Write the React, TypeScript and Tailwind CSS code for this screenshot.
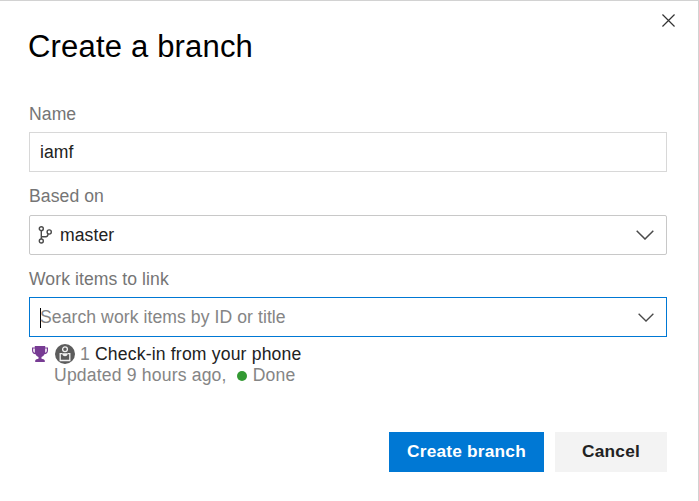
import type { ReactNode } from "react";

function Chevron({ className }: { className: string }) {
  return (
    <svg viewBox="0 0 18 10" fill="none" stroke="#4a4a4a" strokeWidth="1.5" className={className}>
      <path d="M.7.8 9 9 17.3.8" />
    </svg>
  );
}

function Label({ children }: { children: ReactNode }) {
  return <div className="h-[22px] leading-[22px] text-[#757575]">{children}</div>;
}

function BranchIcon() {
  return (
    <svg viewBox="0 0 14 18" fill="none" stroke="#4a4a4a" strokeWidth="1.4" className="h-[18px] w-[14px]">
      <circle cx="3.3" cy="2.7" r="2" />
      <circle cx="3.3" cy="15" r="2" />
      <circle cx="11.2" cy="6" r="2.1" />
      <path d="M3.3 4.700V13M3.300 10.700H8c1.300 0 1.800-1.200 2.200-2.700" />
    </svg>
  );
}

function TrophyIcon() {
  return (
    <svg viewBox="0 0 16 16" className="h-4 w-4">
      <path fill="#773b93" d="M2.800 0h10.400v1.400H16v3.200c0 2.200-1.500 3.600-3.600 3.700-.6 1.400-1.600 2.300-2.900 2.600v1.900c1.500.2 2.800.8 3.300 1.700V16H3.200v-1.500c.5-.9 1.800-1.500 3.300-1.700v-1.900C5.200 10.600 4.200 9.700 3.600 8.300 1.500 8.200 0 6.800 0 4.600V1.400h2.800zM1.200 2.600v2c0 1.100.6 1.900 1.600 2.200V2.600zm12 0v4.200c1-.3 1.600-1.100 1.600-2.200v-2z" />
    </svg>
  );
}

function AvatarIcon() {
  return (
    <svg viewBox="0 0 20 20" className="size-5">
      <circle cx="10" cy="10" r="10" fill="#5c5c5c" />
      <g fill="none" stroke="#f2f2f2" strokeWidth="1.3">
        <circle cx="10" cy="5.300" r="2.400" />
        <path d="M7 9.600H5.200v6.900h9.600V9.600H13" />
        <path fill="#f2f2f2" stroke="none" d="M7 9.200h6c-.3 2-1.400 3-3 3s-2.700-1-3-3z" />
      </g>
    </svg>
  );
}

export default function App() {
  return (
    <main className="flex h-[501px] w-[699px] flex-col border-t border-r border-[#d2d2d2] bg-white pl-[29px] pr-[31px] font-['Liberation_Sans',Arial,sans-serif] text-[17.6px] tracking-[0.07px]">
      <header className="-ml-px flex h-[102px] items-start justify-between">
        <h1 className="pt-[26px] text-[31px] leading-10 tracking-[0.18px] text-black">Create a branch</h1>
        <button aria-label="Close" className="-mr-2 mt-[13px]">
          <svg viewBox="0 0 14 14" fill="none" stroke="#333" strokeWidth="1.3" className="size-[13px]">
            <path d="m.5.5 13 13m0-13-13 13" />
          </svg>
        </button>
      </header>
      <Label>Name</Label>
      <div className="mt-[7px] flex h-10 items-center border border-[#d8d8d8] px-[10px] pt-px text-[#222]">iamf</div>
      <div className="h-[13px]" />
      <Label>Based on</Label>
      <div className="mt-2 flex h-10 items-center rounded-[2px] border border-[#c8c8c8] pl-2 pr-3 text-[#222]">
        <BranchIcon />
        <span className="ml-2 grow">master</span>
        <Chevron className="h-[10px] w-[18px]" />
      </div>
      <div className="h-[13px]" />
      <Label>Work items to link</Label>
      <div className="mt-[7px] flex h-10 items-center border border-[#0078d4] pl-[10px] pr-3 pt-px text-[#858585]">
        <span className="-mr-px h-5 w-px bg-black" />
        <span className="grow">Search work items by ID or title</span>
        <Chevron className="h-[9px] w-4" />
      </div>
      <div className="mt-[6px] flex h-[22px] items-center pl-[3px] tracking-[0.17px]">
        <TrophyIcon />
        <span className="ml-[7px]"><AvatarIcon /></span>
        <span className="ml-[5px] text-[#858585]">1</span>
        <span className="ml-[5px] text-[#222]">Check-in from your phone</span>
      </div>
      <div className="flex h-[21px] items-center pl-[25px] tracking-[0.17px] text-[#858585]">
        <span>Updated 9 hours ago,</span>
        <span className="ml-[10px] mt-px size-[10px] rounded-full bg-[#339933]" />
        <span className="ml-[6px]">Done</span>
      </div>
      <footer className="mt-[46px] flex justify-end gap-[11px] text-[17.3px] font-bold tracking-[0.21px]">
        <button className="h-10 w-[155px] bg-[#0078d4] text-white">Create branch</button>
        <button className="h-10 w-28 bg-[#f3f3f3] text-[#222]">Cancel</button>
      </footer>
    </main>
  );
}
